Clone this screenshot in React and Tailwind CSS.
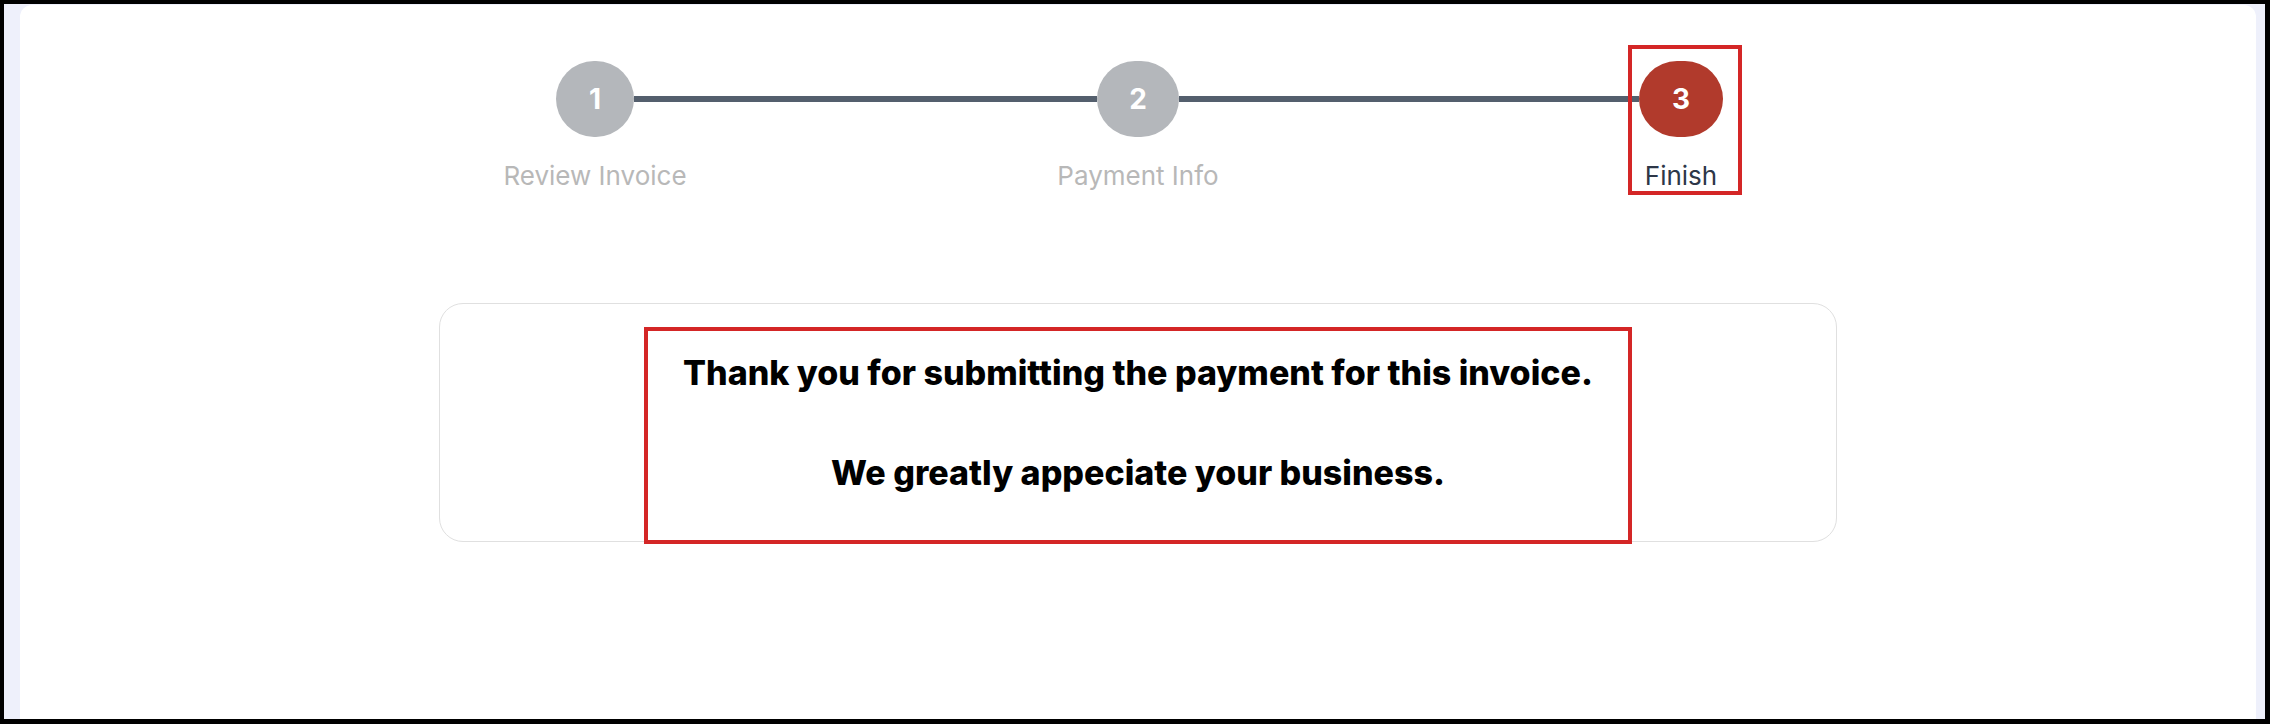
import React from "react";

const steps = [
  { n: 1, label: "Review Invoice", w: "w-[78px]", active: false, first: true },
  { n: 2, label: "Payment Info", w: "w-[82px]", active: false },
  { n: 3, label: "Finish", w: "w-[84px]", active: true, last: true },
];

function Step({ s }) {
  return (
    <div className="relative flex flex-col items-stretch">
      <div className="flex items-center h-[76px]">
        <div className={"flex-1 h-[6px] " + (s.first ? "bg-transparent" : "bg-[#545f6d]")} />
        <div
          className={
            "h-[76px] rounded-full flex items-center justify-center text-white font-bold text-[28px] " +
            s.w +
            " " +
            (s.active ? "bg-[#b13a2c]" : "bg-[#b4b7bb]")
          }
        >
          {s.n}
        </div>
        <div className={"flex-1 h-[6px] " + (s.last ? "bg-transparent" : "bg-[#545f6d]")} />
      </div>
      <div
        className={
          "mt-[22px] text-center text-[26px] leading-[34px] " +
          (s.active ? "text-[#2d3748]" : "text-[#b8b8b8]")
        }
      >
        {s.label}
      </div>
      {s.active && (
        <div className="absolute top-[-16px] left-[218px] w-[114px] h-[150px] border-[4px] border-[#d42626] pointer-events-none" />
      )}
    </div>
  );
}

export default function App() {
  return (
    <div
      className="w-[2270px] h-[724px] bg-black pt-[4px] pl-[4px] pr-[5px] pb-[5px]"
      style={{ fontFamily: "Inter, 'Noto Sans', sans-serif" }}
    >
      <div className="h-full bg-[#eef0fb] pl-[16px] pr-[9px] pt-[1px] flex">
        <div className="flex-1 bg-white rounded-t-[12px] flex flex-col items-center pt-[56px]">
          <div className="grid grid-cols-3 w-[1629px]">
            {steps.map((s) => (
              <Step key={s.n} s={s} />
            ))}
          </div>
          <div className="mt-[110px] w-[1398px] h-[239px] border border-[#e0e0e0] rounded-[24px] pt-[23px] flex flex-col items-center">
            <div className="w-[988px] h-[217px] border-[4px] border-[#d42626] pt-[17px] flex flex-col items-center gap-[50px] text-black font-extrabold text-[34px] leading-[50px] shrink-0">
              <p>Thank you for submitting the payment for this invoice.</p>
              <p>We greatly appeciate your business.</p>
            </div>
          </div>
        </div>
      </div>
    </div>
  );
}
